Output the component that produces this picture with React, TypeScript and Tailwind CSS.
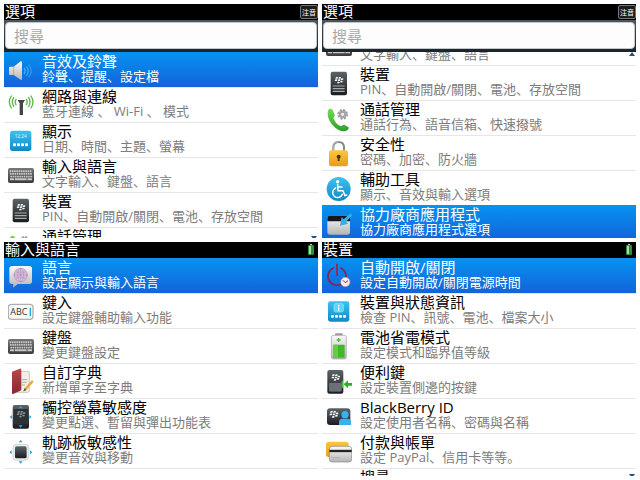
import type { ReactNode } from 'react';
import clsx from 'clsx';

type Item = { title: string; desc: string; icon: ReactNode };

function Icon({ children }: { children: ReactNode }) {
  return (
    <svg viewBox="0 0 78 87" className="w-[26px] h-[29px] shrink-0" aria-hidden="true">
      {children}
    </svg>
  );
}

// Shared gradients, referenced by id from every icon
function Gradients() {
  const list = [
    ['gSilver', '#fafafa', '#b4b4b4'],
    ['gSky', '#3cc3f2', '#1288c6'],
    ['gDark', '#5c6468', '#1a1d20'],
    ['gGray', '#777777', '#3c3c3c'],
    ['gGold', '#fbc63c', '#eb9a1c'],
    ['gGreen', '#6fdc52', '#2f9e2a'],
    ['gRed', '#b8474c', '#8a2630'],
  ];
  return (
    <svg className="absolute w-0 h-0" aria-hidden="true">
      <defs>
        {list.map(([id, from, to]) => (
          <linearGradient key={id} id={id} x1="0" y1="0" x2="0" y2="1">
            <stop offset="0" stopColor={from} />
            <stop offset="1" stopColor={to} />
          </linearGradient>
        ))}
      </defs>
    </svg>
  );
}

// The seven-lobe mark on the handset icons
function Lobes({ x, y, s = 1, fill = '#f2f2f2' }: { x: number; y: number; s?: number; fill?: string }) {
  const spots = [[2, 0], [11, 0], [0, 7], [9, 7], [18, 4], [7, 14], [16, 11]];
  return (
    <g transform={`translate(${x} ${y}) scale(${s})`} fill={fill}>
      {spots.map(([cx, cy]) => (
        <path key={`${cx}-${cy}`} d={`M${cx + 1} ${cy}h4q3 0 2 3t-4 2h-4z`} />
      ))}
    </g>
  );
}

function Keyboard() {
  return (
    <Icon>
      <rect x="0" y="21" width="78" height="45" rx="6" fill="url(#gGray)" />
      {[28, 36, 44].map((y, i) => (
        <g key={y} fill="#c8c8c8">
          {Array.from({ length: 10 }, (_, n) => (
            <rect key={n} x={5 + i + n * 6.7} y={y} width="5" height="5.5" rx="1" />
          ))}
        </g>
      ))}
      <g fill="#c8c8c8">
        <rect x="6" y="52" width="12" height="6" rx="1" />
        <rect x="20" y="52" width="36" height="6" rx="1" />
        <rect x="58" y="52" width="14" height="6" rx="1" />
      </g>
    </Icon>
  );
}

function Device() {
  return (
    <Icon>
      <rect x="14" y="8" width="49" height="71" rx="6" fill="url(#gDark)" />
      <Lobes x={27} y={24} />
      <path d="M20 51h36M20 59h36M20 67h36" stroke="#a8aaac" strokeWidth="3.5" />
    </Icon>
  );
}

function PhoneGear() {
  return (
    <Icon>
      <path
        d="M6 20C10 12 18 13 21 20L26 32C28 37 21 39 23 44C27 54 34 62 43 66C48 68 50 60 56 63L67 69C71 73 65 81 57 82C33 84 -1 50 6 20Z"
        fill="url(#gGreen)"
      />
      <circle cx="50" cy="31" r="13" fill="none" stroke="#9a9a9a" strokeWidth="6" strokeDasharray="6 4.2" />
      <circle cx="50" cy="31" r="8" fill="none" stroke="#a6a6a6" strokeWidth="8" />
      <circle cx="50" cy="31" r="4" fill="#ececec" />
    </Icon>
  );
}

const speaker = (
  <Icon>
    <path d="M6 32h11L38 16q4-2 4 3v50q0 4-4 2L17 57H6q-3 0-3-3V35q0-3 3-3z" fill="url(#gSilver)" />
    <path d="M17 32v25" stroke="#9c9c9c" strokeWidth="2" />
    <g fill="none" stroke="#4db4f6" strokeWidth="3.5" strokeLinecap="round">
      <path d="M49 37q5 8 0 16" />
      <path d="M56 32q9 13 0 26" opacity=".8" />
      <path d="M63 27q13 18 0 36" opacity=".6" />
    </g>
  </Icon>
);

const network = (
  <Icon>
    <g fill="none" stroke="#58b848" strokeWidth="4" strokeLinecap="round">
      <path d="M24 25q-5 8 0 16M17 20q-8 13 0 26M10 15q-12 18 0 36" />
      <path d="M55 25q5 8 0 16M62 20q8 13 0 26M69 15q12 18 0 36" />
    </g>
    <path d="M29 27h22l-6 10v35H35V37z" fill="#454545" />
  </Icon>
);

const display = (
  <Icon>
    <rect x="6" y="14" width="64" height="61" rx="8" fill="url(#gSky)" />
    <text x="38" y="36" fontSize="14" textAnchor="middle" fill="#d8f4ff" fontFamily="Noto Sans">12:24</text>
    <g fill="#fff">
      {[15, 27, 39, 51].map((x) => <rect key={x} x={x} y="52" width="9" height="9" rx="3" />)}
    </g>
  </Icon>
);

const lock = (
  <Icon>
    <path d="M22 38V26q0-17 16-17t16 17v12" fill="none" stroke="#888" strokeWidth="6" />
    <path d="M22 38V26q0-17 16-17" fill="none" stroke="#b8b8b8" strokeWidth="3" />
    <rect x="9" y="34" width="57" height="48" rx="7" fill="url(#gGold)" />
    <circle cx="38" cy="53" r="6" fill="#4a3413" />
    <path d="M36 55h4l1 11h-6z" fill="#4a3413" />
  </Icon>
);

const accessibility = (
  <Icon>
    <circle cx="38" cy="45" r="36" fill="url(#gSky)" />
    <circle cx="35" cy="23" r="5" fill="#fff" />
    <g fill="none" stroke="#fff" strokeWidth="4.5" strokeLinecap="round" strokeLinejoin="round">
      <path d="M35 31l1 19h15l6 15 5-2" />
      <path d="M36 39h12" />
      <path d="M29 42a15 15 0 1 0 20 19" />
    </g>
  </Icon>
);

const thirdParty = (
  <Icon>
    <rect x="4" y="20" width="68" height="57" rx="7" fill="url(#gSilver)" />
    <path d="M4 37V27q0-7 7-7h54q7 0 7 7v10z" fill="#15181b" />
    <path d="M73 13l6 6-19 19 7 6-25 6 5-26 6 7z" fill="#35aee2" />
  </Icon>
);

const language = (
  <Icon>
    <path d="M12 12h52q8 0 8 8v38q0 8-8 8H29L15 77l1-11h-4q-8 0-8-8V20q0-8 8-8z" fill="url(#gSilver)" />
    <circle cx="38" cy="39" r="20" fill="#dcc4e0" stroke="#b48abd" strokeWidth="2" />
    <g fill="none" stroke="#b088ba" strokeWidth="1.6">
      <ellipse cx="38" cy="39" rx="9" ry="20" />
      <ellipse cx="38" cy="39" rx="20" ry="9" />
      <path d="M24 25l28 28M52 25L24 53M38 19v40M18 39h40" />
    </g>
  </Icon>
);

const typing = (
  <Icon>
    <rect x="1" y="22" width="74" height="45" rx="9" fill="#f7f7f7" stroke="#b0b0b0" strokeWidth="4" />
    <text x="7" y="54" fontSize="27" fill="#333" fontFamily="Open Sans">ABC</text>
    <path d="M67 32v26" stroke="#22a7e0" strokeWidth="4" />
  </Icon>
);

const dictionary = (
  <Icon>
    <path d="M22 13h38q4 0 4 4v54q0 5-5 5H22z" fill="#f2efe8" stroke="#b5b0a8" strokeWidth="2" />
    <path d="M42 38h15M42 46h14M42 54h9" stroke="#aaa" strokeWidth="3" />
    <path d="M12 14L36 5q4-1 4 4v57q0 3-3 5L15 81q-3 1-3-3z" fill="url(#gRed)" />
    <path d="M72 39l5 5-22 25-9 4 4-9z" fill="#eaa63a" />
    <path d="M50 64l5 5-9 4z" fill="#554433" />
  </Icon>
);

const touchscreen = (
  <Icon>
    <rect x="14" y="9" width="49" height="71" rx="6" fill="url(#gDark)" />
    <rect x="17" y="21" width="43" height="45" fill="#2c3236" />
    <Lobes x={27} y={27} fill="#899096" />
    <g fill="#2ba9e8">
      <path d="M38 12l6 7H32zM38 77l6-7H32zM5 45l7-6v12zM71 45l-7-6v12z" />
    </g>
  </Icon>
);

const trackpad = (
  <Icon>
    <rect x="15" y="22" width="47" height="48" rx="10" fill="#ededed" stroke="#c4c4c4" strokeWidth="2" />
    <rect x="21" y="28" width="35" height="36" rx="5" fill="url(#gDark)" />
    <g fill="#2b9fdc">
      <path d="M38 9l6 7H32zM38 80l6-7H32zM4 46l7-6v12zM73 46l-7-6v12z" />
    </g>
  </Icon>
);

const power = (
  <Icon>
    <path d="M22 18A27 27 0 1 0 44 18" fill="none" stroke="#8e2049" strokeWidth="5" strokeLinecap="round" />
    <path d="M33 7v33" stroke="#a31d40" strokeWidth="5" strokeLinecap="round" />
    <circle cx="58" cy="60" r="14" fill="#f4eef0" stroke="#bc8a96" strokeWidth="2" />
    <path d="M51 55l7 7 8-6" fill="none" stroke="#7c3040" strokeWidth="3" />
  </Icon>
);

const deviceInfo = (
  <Icon>
    <rect x="6" y="13" width="64" height="61" rx="7" fill="url(#gSky)" />
    <rect x="24" y="20" width="28" height="25" rx="5" fill="#5dd4fa" stroke="#a5e9ff" strokeWidth="2" />
    <circle cx="38" cy="26" r="2.5" fill="#fff" />
    <path d="M38 31v10" stroke="#fff" strokeWidth="4" />
    <g fill="#fff">
      {[15, 27, 39, 51].map((x) => <rect key={x} x={x} y="54" width="9" height="8" rx="3" />)}
    </g>
  </Icon>
);

const battery = (
  <Icon>
    <rect x="27" y="4" width="23" height="10" rx="3" fill="#9b9b9b" />
    <rect x="16" y="10" width="45" height="71" rx="6" fill="url(#gSilver)" stroke="#a0a0a0" strokeWidth="2" />
    <rect x="21" y="38" width="35" height="39" rx="2" fill="#45b52c" />
    <rect x="21" y="38" width="15" height="39" rx="2" fill="#62cf42" />
    <path d="M38 18v12M32 24h12" stroke="#58b848" strokeWidth="4" />
  </Icon>
);

const convenienceKey = (
  <Icon>
    <rect x="4" y="9" width="48" height="71" rx="6" fill="url(#gDark)" />
    <Lobes x={17} y={22} />
    <rect x="10" y="49" width="36" height="24" rx="2" fill="#6a7074" stroke="#989c9e" />
    <path d="M49 42v20" stroke="#4fc03c" strokeWidth="4" />
    <path d="M53 52l13-12v8h13v8H66v8z" fill="#2fae2b" />
  </Icon>
);

const blackberryId = (
  <Icon>
    <rect x="3" y="19" width="70" height="50" rx="9" fill="url(#gDark)" />
    <Lobes x={11} y={27} s={1.05} />
    <circle cx="57" cy="38" r="11" fill="#35b4ec" />
    <path d="M39 69V60q0-9 9-10h18q9 1 9 10v9z" fill="#35b4ec" />
  </Icon>
);

const payment = (
  <Icon>
    <rect x="0" y="14" width="68" height="46" rx="8" fill="url(#gGold)" />
    <rect x="10" y="28" width="67" height="47" rx="8" fill="url(#gSilver)" stroke="#888" strokeWidth="2" />
    <path d="M10 42h67" stroke="#222" strokeWidth="7" />
    <path d="M18 62h24" stroke="#b0b0b0" strokeWidth="3" />
  </Icon>
);

const optionItems: Item[] = [
  { title: '音效及鈴聲', desc: '鈴聲、提醒、設定檔', icon: speaker },
  { title: '網路與連線', desc: '藍牙連線 、 Wi-Fi 、 模式', icon: network },
  { title: '顯示', desc: '日期、時間、主題、螢幕', icon: display },
  { title: '輸入與語言', desc: '文字輸入、鍵盤、語言', icon: <Keyboard /> },
  { title: '裝置', desc: 'PIN、自動開啟/關閉、電池、存放空間', icon: <Device /> },
  { title: '通話管理', desc: '通話行為、語音信箱、快速撥號', icon: <PhoneGear /> },
  { title: '安全性', desc: '密碼、加密、防火牆', icon: lock },
  { title: '輔助工具', desc: '顯示、音效與輸入選項', icon: accessibility },
  { title: '協力廠商應用程式', desc: '協力廠商應用程式選項', icon: thirdParty },
];

const inputItems: Item[] = [
  { title: '語言', desc: '設定顯示與輸入語言', icon: language },
  { title: '鍵入', desc: '設定鍵盤輔助輸入功能', icon: typing },
  { title: '鍵盤', desc: '變更鍵盤設定', icon: <Keyboard /> },
  { title: '自訂字典', desc: '新增單字至字典', icon: dictionary },
  { title: '觸控螢幕敏感度', desc: '變更點選、暫留與彈出功能表', icon: touchscreen },
  { title: '軌跡板敏感性', desc: '變更音效與移動', icon: trackpad },
];

const deviceItems: Item[] = [
  { title: '自動開啟/關閉', desc: '設定自動開啟/關閉電源時間', icon: power },
  { title: '裝置與狀態資訊', desc: '檢查 PIN、訊號、電池、檔案大小', icon: deviceInfo },
  { title: '電池省電模式', desc: '設定模式和臨界值等級', icon: battery },
  { title: '便利鍵', desc: '設定裝置側邊的按鍵', icon: convenienceKey },
  { title: 'BlackBerry ID', desc: '設定使用者名稱、密碼與名稱', icon: blackberryId },
  { title: '付款與帳單', desc: '設定 PayPal、信用卡等等。', icon: payment },
  { title: '搜尋', desc: '', icon: <Icon>{null}</Icon> },
];

function Row({ item, selected }: { item: Item; selected: boolean }) {
  return (
    <li>
      <button
        className={clsx(
          'flex w-full h-[35px] items-center gap-2 pl-1 text-left border-t whitespace-pre',
          selected
            ? 'border-[#0a8fec] bg-linear-to-b from-[#0792f0] to-[#1363da] text-white'
            : 'border-[#e6e6e6] text-black'
        )}
      >
        {item.icon}
        <span className="flex flex-col pb-[3px]">
          <span className="text-[15px] leading-[16px]">{item.title}</span>
          <span className={clsx('h-[15px] text-[13px] leading-[15px]', !selected && 'text-[#7c7c7c]')}>{item.desc}</span>
        </span>
      </button>
    </li>
  );
}

function InputMode() {
  return (
    <span className="flex h-[14px] items-center rounded-xs border border-[#777] bg-[#1c1c1c] px-px text-[7px] leading-none">
      注音
    </span>
  );
}

function BatteryLevel() {
  return (
    <svg viewBox="0 0 6 12" className="w-[6px] h-3 mr-1" aria-hidden="true">
      <rect x="2" y="0" width="2" height="2" fill="#ccc" />
      <rect x="0" y="1" width="6" height="10" rx="1" fill="#2e8f3a" />
      <rect x="1" y="2" width="2" height="8" fill="#a5e0a0" />
    </svg>
  );
}

function More({ up = false }: { up?: boolean }) {
  return (
    <svg
      viewBox="0 0 6 4"
      className={clsx('absolute right-px w-[6px] h-1', up ? 'top-0' : '-bottom-[2px] rotate-180')}
      aria-hidden="true"
    >
      <path d="M3 0l3 4H0z" fill="#1c5286" />
    </svg>
  );
}

type ScreenProps = {
  title: string;
  items: Item[];
  selected?: number;
  searchId?: string;
  scrolled?: boolean;
  more?: ReactNode;
};

function Screen({ title, items, selected = 0, searchId, scrolled = false, more }: ScreenProps) {
  return (
    <section className="flex min-h-0 min-w-0 flex-col overflow-hidden bg-white">
      <header className="flex h-4 shrink-0 items-center justify-between bg-black pl-px text-white">
        <h2 className="self-start text-[15px] leading-[14px]">{title}</h2>
        {searchId ? <InputMode /> : <BatteryLevel />}
      </header>

      {searchId && (
        <div className="h-8 shrink-0 bg-linear-to-b from-[#4a5660] to-[#1a232a] px-px pt-[2px] pb-[3px]">
          <label htmlFor={searchId} className="sr-only">搜尋</label>
          <input
            id={searchId}
            type="text"
            placeholder="搜尋"
            className="block h-full w-full rounded-sm border border-[#c4c8cb] bg-[#fdfdfd] px-2 text-[15px] outline-none placeholder:text-[#a8a8a8]"
          />
        </div>
      )}

      <div className="relative min-h-0 flex-1 overflow-hidden">
        <ul className={clsx('border-b border-[#e6e6e6]', scrolled && '-mt-[22px]')}>
          {items.map((item, i) => (
            <Row key={item.title} item={item} selected={i === selected} />
          ))}
        </ul>
        {more}
      </div>
    </section>
  );
}

export default function App() {
  return (
    <main className="relative grid h-screen grid-cols-2 grid-rows-2 gap-1 overflow-hidden bg-white p-1 font-['Open_Sans','Noto_Sans_CJK_SC',sans-serif]">
      <Gradients />
      <Screen title="選項" items={optionItems.slice(0, 6)} searchId="search-top" more={<More />} />
      <Screen title="選項" items={optionItems.slice(3)} selected={5} searchId="search-end" scrolled more={<More up />} />
      <Screen title="輸入與語言" items={inputItems} />
      <Screen title="裝置" items={deviceItems} more={<More />} />
    </main>
  );
}
